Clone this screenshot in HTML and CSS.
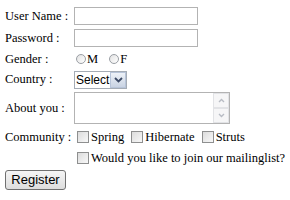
FILE: index.html
```html
<!DOCTYPE html>
<html lang="en">
<head>
    <meta charset="UTF-8">
    <meta name="viewport" content="width=device-width, initial-scale=1.0">
    <title>Register</title>
    <link rel="stylesheet" href="styles.css">
</head>
<body>
    <form class="reg-form">
        <label class="field-label" for="username">User Name :</label>
        <div class="field"><input class="text-input" type="text" id="username" name="username"></div>

        <label class="field-label" for="password">Password :</label>
        <div class="field"><input class="text-input" type="password" id="password" name="password"></div>

        <span class="field-label">Gender :</span>
        <div class="field gender">
            <label class="opt"><input class="radio" type="radio" name="gender" value="M">M</label>
            <label class="opt"><input class="radio" type="radio" name="gender" value="F">F</label>
        </div>

        <label class="field-label" for="country">Country :</label>
        <div class="field">
            <span class="select-box">
                <select id="country" name="country">
                    <option>Select</option>
                    <option>India</option>
                    <option>USA</option>
                </select>
                <span class="select-arrow">
                    <svg width="9" height="6" viewBox="0 0 9 6"><path d="M1 1l3.5 3.5L8 1" fill="none" stroke="#3c4a66" stroke-width="1.8"/></svg>
                </span>
            </span>
        </div>

        <label class="field-label" for="about">About you :</label>
        <div class="field">
            <span class="area-box">
                <textarea id="about" name="about"></textarea>
                <span class="scrollbar">
                    <span class="scroll-btn">
                        <svg width="7" height="5" viewBox="0 0 7 5"><path d="M1 4l2.5-2.5L6 4" fill="none" stroke="#b8bcc4" stroke-width="1.4"/></svg>
                    </span>
                    <span class="scroll-btn">
                        <svg width="7" height="5" viewBox="0 0 7 5"><path d="M1 1l2.5 2.5L6 1" fill="none" stroke="#b8bcc4" stroke-width="1.4"/></svg>
                    </span>
                </span>
            </span>
        </div>

        <span class="field-label">Community :</span>
        <div class="field">
            <label class="opt"><input class="check" type="checkbox" name="community" value="Spring">Spring</label>
            <label class="opt"><input class="check" type="checkbox" name="community" value="Hibernate">Hibernate</label>
            <label class="opt"><input class="check" type="checkbox" name="community" value="Struts">Struts</label>
        </div>

        <span class="field-label"></span>
        <div class="field">
            <label class="opt"><input class="check" type="checkbox" name="mailingList">Would you like to join our mailinglist?</label>
        </div>

        <div class="actions">
            <button type="submit" class="btn">Register</button>
        </div>
    </form>
</body>
</html>
```

FILE: styles.css
```css
body {
    margin: 0;
    background-color: #fff;
    font-family: "Liberation Serif", "Times New Roman", serif;
    font-size: 12.5px;
    color: #000;
}
.reg-form {
    display: grid;
    grid-template-columns: 65px 1fr;
    grid-template-rows: 20px 20px 18px 19px 34px 20px 18px 21px;
    column-gap: 4px;
    row-gap: 2px;
    padding: 6px 0 0 5px;
    align-items: center;
}
.field-label {
    white-space: nowrap;
}
.field {
    display: flex;
    align-items: center;
    white-space: nowrap;
}
.text-input {
    box-sizing: border-box;
    width: 124px;
    height: 18px;
    margin: 0;
    padding: 1px 2px;
    border: 1px solid #b3b3b3;
    font-family: "Liberation Serif", serif;
    font-size: 12.5px;
}
.opt {
    display: inline-flex;
    align-items: center;
    margin-right: 4px;
}
.gender .opt {
    margin-right: 9px;
}
.radio {
    appearance: none;
    width: 10px;
    height: 10px;
    margin: 0 1px 0 2px;
    border: 1px solid #9a9ea4;
    border-radius: 50%;
    background: linear-gradient(135deg, #e2e2e2, #fff);
}
.check {
    appearance: none;
    box-sizing: border-box;
    width: 12px;
    height: 12px;
    margin: 0 2px 0 3px;
    border: 1px solid #8e8f8f;
    background: linear-gradient(135deg, #dcdcdc, #f8f8f8);
}
.select-box {
    display: inline-flex;
    box-sizing: border-box;
    height: 18px;
    border: 1px solid #a5acb5;
}
.select-box select {
    appearance: none;
    width: 35px;
    margin: 0;
    padding: 0 0 0 1px;
    border: none;
    background: #fff;
    font-family: "Liberation Sans", Arial, sans-serif;
    font-size: 12px;
    color: #000;
}
.select-arrow {
    display: flex;
    align-items: center;
    justify-content: center;
    width: 14px;
    border: 1px solid #b7c4d9;
    background: linear-gradient(#eef2f8, #c9d3e3);
}
.area-box {
    display: inline-flex;
    box-sizing: border-box;
    width: 156px;
    height: 32px;
    border: 1px solid #b3b3b3;
}
.area-box textarea {
    flex: 1;
    margin: 0;
    border: none;
    resize: none;
    outline: none;
}
.scrollbar {
    display: flex;
    flex-direction: column;
    justify-content: space-between;
    width: 16px;
    background: #f4f4f4;
}
.scroll-btn {
    display: flex;
    align-items: center;
    justify-content: center;
    height: 14px;
    border: 1px solid #e2e3e6;
    background: #f6f6f7;
}
.actions {
    grid-column: 1 / 3;
}
.btn {
    width: 61px;
    height: 20px;
    padding: 0;
    border: 1px solid #707070;
    border-radius: 3px;
    background: linear-gradient(#f5f5f5, #dddddd);
    font-family: "Liberation Sans", Arial, sans-serif;
    font-size: 13px;
    color: #000;
}
```
